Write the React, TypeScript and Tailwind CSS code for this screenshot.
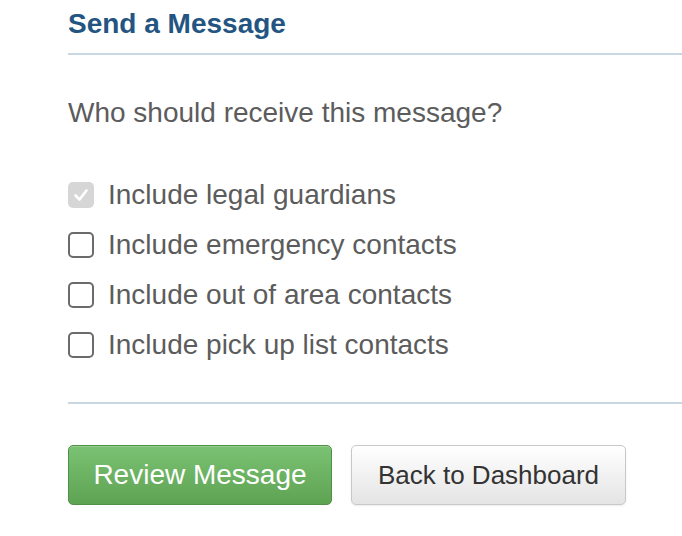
import React from "react";

function Box({ checked }: { checked?: boolean }) {
  if (checked) {
    return (
      <span className="flex h-[26px] w-[26px] shrink-0 items-center justify-center rounded-[5px] bg-[#d6d6d6]">
        <svg width="18" height="18" viewBox="0 0 18 18" fill="none">
          <path d="M3.5 9.5 L7.5 13.5 L14.5 4.5" stroke="white" strokeWidth="2.6" strokeLinecap="round" strokeLinejoin="round" />
        </svg>
      </span>
    );
  }
  return <span className="block h-[26px] w-[26px] shrink-0 rounded-[5px] border-2 border-[#6b6b6b] bg-white" />;
}

export default function App() {
  const rows = [
    { label: "Include legal guardians", checked: true },
    { label: "Include emergency contacts" },
    { label: "Include out of area contacts" },
    { label: "Include pick up list contacts" },
  ];
  return (
    <div className="min-h-[536px] w-[682px] bg-white pl-[68px] font-['Liberation_Sans',Arial,sans-serif]">
      <div className="pt-[9px]">
        <h1 className="h-[30px] text-[28px] font-bold leading-[30px] text-[#245582]">Send a Message</h1>
      </div>
      <div className="mt-[14px] h-[2px] bg-[#c9d7e3]" />
      <p className="mt-[43px] h-[30px] text-[28px] leading-[30px] text-[#5c5c5c]">Who should receive this message?</p>
      <div className="mt-[52px] flex flex-col gap-[20px]">
        {rows.map((r) => (
          <label key={r.label} className="flex h-[30px] items-center gap-[14px]">
            <Box checked={r.checked} />
            <span className="text-[28px] leading-[30px] text-[#5c5c5c]">{r.label}</span>
          </label>
        ))}
      </div>
      <div className="mt-[42px] h-[2px] bg-[#c9d7e3]" />
      <div className="mt-[41px] flex gap-[19px]">
        <button className="flex h-[60px] w-[264px] items-center justify-center rounded-[5px] border border-[#4f9146] bg-gradient-to-b from-[#7cc274] to-[#5da352] text-[28px] text-white shadow-[inset_0_1px_0_rgba(255,255,255,0.2)]">
          Review Message
        </button>
        <button className="flex h-[60px] w-[275px] items-center justify-center rounded-[5px] border border-[#c8c8c8] bg-gradient-to-b from-white to-[#e4e4e4] text-[26px] text-[#333] shadow-[0_1px_2px_rgba(0,0,0,0.08)]">
          Back to Dashboard
        </button>
      </div>
    </div>
  );
}
